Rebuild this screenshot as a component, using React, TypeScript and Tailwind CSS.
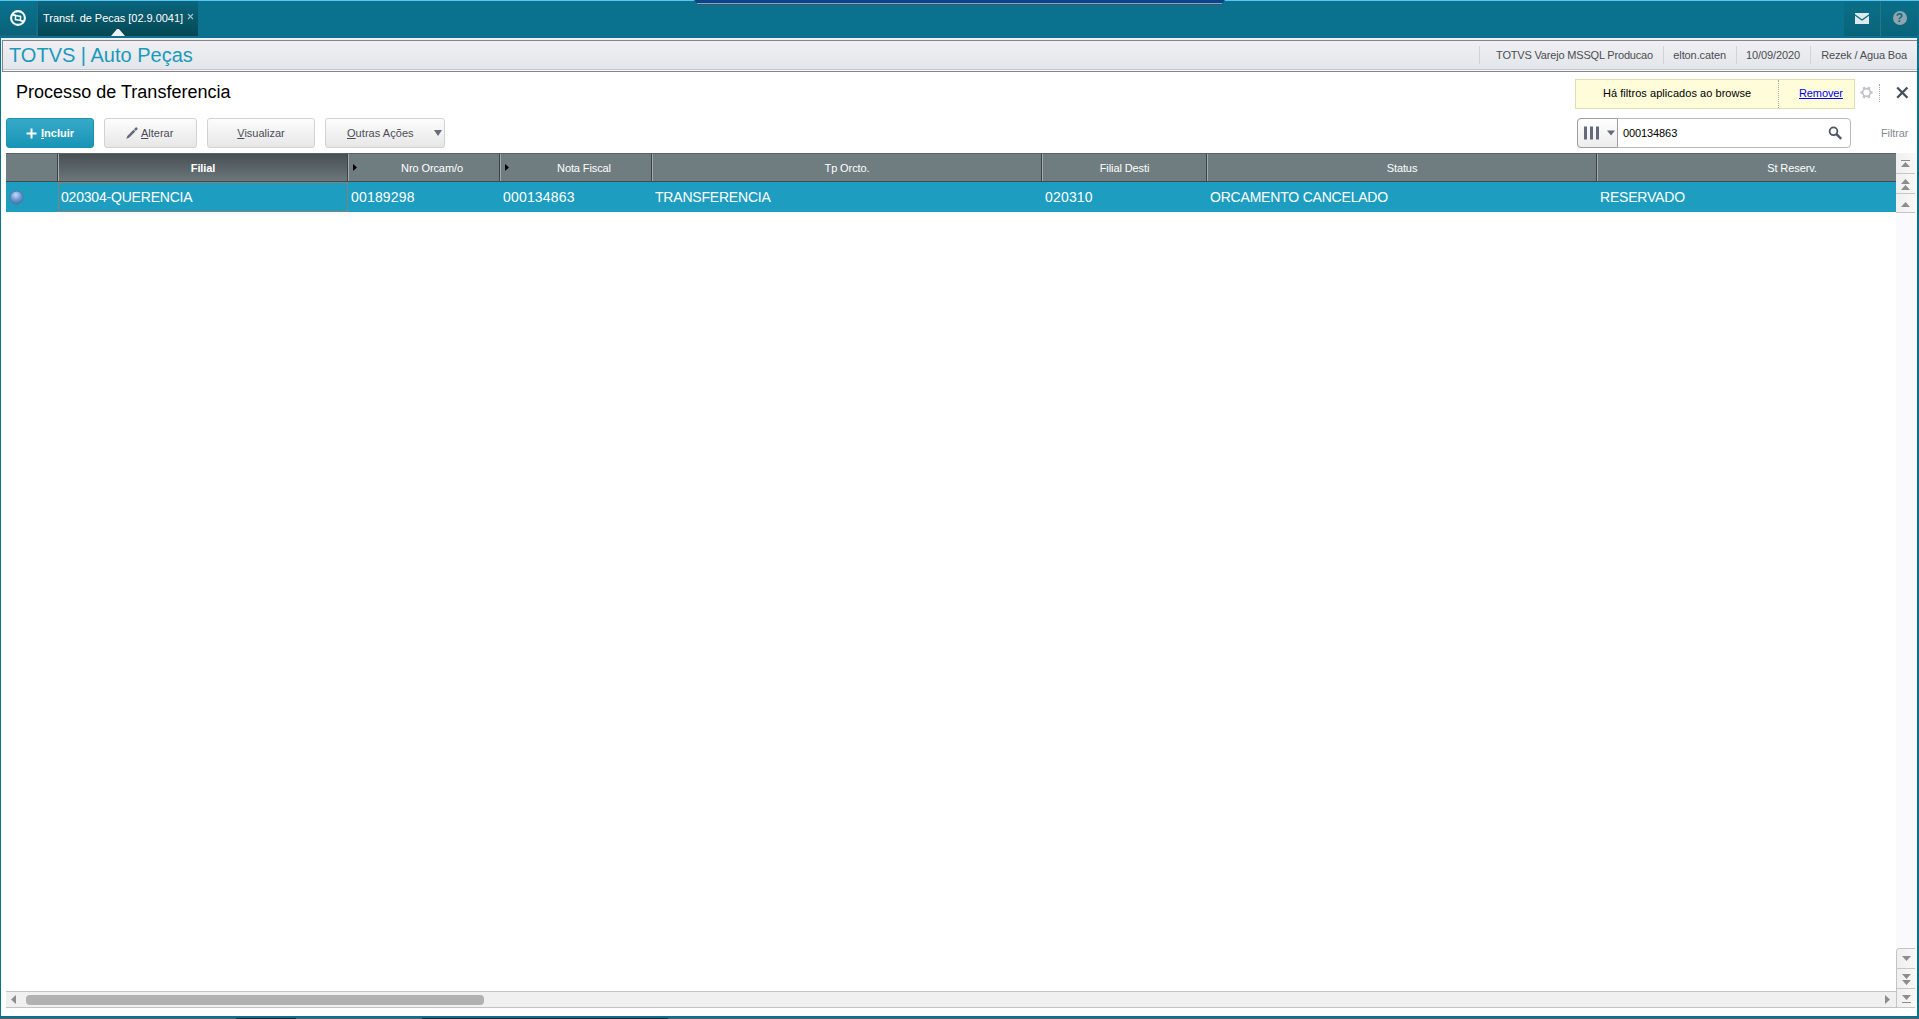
import type { ReactNode } from "react";

type Column = {
  label: string;
  value: string;
  width: string;
  sorted?: boolean;
  arrow?: boolean;
};

const columns: Column[] = [
  { label: "Filial", value: "020304-QUERENCIA", width: "w-[290px]", sorted: true },
  { label: "Nro Orcam/o", value: "00189298", width: "w-[152px]", arrow: true },
  { label: "Nota Fiscal", value: "000134863", width: "w-[152px]", arrow: true },
  { label: "Tp Orcto.", value: "TRANSFERENCIA", width: "w-[390px]" },
  { label: "Filial Desti", value: "020310", width: "w-[165px]" },
  { label: "Status", value: "ORCAMENTO CANCELADO", width: "w-[390px]" },
  { label: "St Reserv.", value: "RESERVADO", width: "w-[390px]" },
];

export default function App() {
  return (
    <div className="flex h-[1019px] w-[1919px] flex-col overflow-hidden bg-[#0a728e] font-['Liberation_Sans',Arial,sans-serif] text-[11px] leading-[13px]">
      <TopBar />
      <div className="mr-[2px] ml-px flex h-[978px] flex-col bg-white">
        <InfoBar />
        <Toolbar />
        <Browse />
      </div>
      <div className="h-[2px] shrink-0" />
      <div className="flex h-px shrink-0 bg-[#5d6063]">
        <span className="ml-[236px] w-[60px] bg-[#222]" />
        <span className="ml-[126px] w-[246px] bg-[#222]" />
      </div>
    </div>
  );
}

function TopBar() {
  return (
    <div className="relative flex h-[38px] shrink-0 border-t border-[#5bc4ee]">
      <svg className="absolute -top-px left-[693px]" width="533" height="5" aria-hidden="true">
        <path d="M1 0H532L528 4.5H5Z" fill="#0b4488" />
        <path d="M4 3.5H529" stroke="#7ea6cc" />
        <path d="M5 4.5H528" stroke="#4c5156" />
      </svg>
      <div className="flex h-[35px] w-[37px] items-center justify-center border-r border-b border-[#22657a] bg-linear-to-b from-[#0a728e] to-[#09637a]">
        <LogoMark />
      </div>
      <div className="relative ml-px flex h-[35px] w-[160px] bg-linear-to-b from-[#09657e] to-[#064855] pt-[11px] pl-[5px] text-white">
        <span className="w-[141px] tracking-[-0.03px] whitespace-nowrap">Transf. de Pecas [02.9.0041]</span>
        <svg className="ml-[3px]" width="7" height="9" viewBox="0 0 7 9" aria-hidden="true">
          <path d="M1 2l5 5M6 2l-5 5" stroke="#9fc3cd" strokeWidth="1.1" />
        </svg>
        <svg className="absolute bottom-0 left-[73px]" width="14" height="7" aria-hidden="true">
          <path d="M0 7L6 0H8L14 7Z" fill="#eef0f3" />
        </svg>
      </div>
      <div className="ml-auto flex h-[35px]">
        <div className="flex w-[37px] items-center justify-center border-r border-[#2d7387] bg-linear-to-b from-[#0a6e88] to-[#09647a]">
          <svg className="mt-[-1px]" width="14" height="11" viewBox="0 0 14 11" aria-hidden="true">
            <path d="M0 0H14V1.3L7 6.3L0 1.3Z" fill="#dce9ed" />
            <path d="M0 2.8L7 7.8L14 2.8V11H0Z" fill="#dce9ed" />
          </svg>
        </div>
        <div className="flex w-[37px] items-center justify-center bg-linear-to-b from-[#0a6e88] to-[#09647a]">
          <div className="mt-[-1px] flex h-[14px] w-[14px] items-center justify-center rounded-full bg-[#8fa4ad] text-[12px] leading-none font-bold text-[#0a6a83]">
            ?
          </div>
        </div>
        <div className="w-px" />
      </div>
    </div>
  );
}

function InfoBar() {
  return (
    <div className="flex h-[34px] shrink-0 flex-col bg-[#eef0f3] pt-[2px]">
      <div className="ml-px flex h-[32px] items-center border-y border-l border-[#868686] bg-linear-to-b from-[#f0f0f4] to-[#e1e5e9] pb-[2px] shadow-[inset_0_-1px_0_#f8f8fa,inset_0_-2px_0_#c5c8cc]">
        <div className="ml-[6px] text-[20px] leading-[28px] whitespace-nowrap text-[#1a9abc]">
          TOTVS | Auto Peças
        </div>
        <div className="ml-auto flex h-[18px] items-center text-[#4b4d52] whitespace-nowrap">
          <InfoItem width="w-[184px]">
            <span className="tracking-[-0.18px]">TOTVS Varejo MSSQL Producao</span>
          </InfoItem>
          <InfoItem width="w-[73px]">
            <span className="tracking-[-0.1px]">elton.caten</span>
          </InfoItem>
          <InfoItem width="w-[74px]">
            <span className="tracking-[-0.1px]">10/09/2020</span>
          </InfoItem>
          <InfoItem width="w-[107px]">
            <span className="tracking-[-0.14px]">Rezek / Agua Boa</span>
          </InfoItem>
        </div>
      </div>
    </div>
  );
}

function InfoItem({ width, children }: { width: string; children: ReactNode }) {
  return (
    <div className={`flex h-[18px] items-center justify-end border-l border-[#d0d3d7] pr-[10px] ${width}`}>
      {children}
    </div>
  );
}

function Toolbar() {
  return (
    <div className="flex h-[81px] shrink-0 justify-between">
      <div>
        <h1 className="mt-[9px] ml-[15px] text-[18px] leading-[22px] tracking-[0.02px] text-black">
          Processo de Transferencia
        </h1>
        <div className="mt-[15px] ml-[5px] flex gap-[10px] text-[#4a4d57]">
          <button className="flex h-[30px] w-[88px] items-center rounded-[3px] border border-[#1a94b3] bg-linear-to-b from-[#37a9c8] to-[#1595b6] pl-[19px] font-bold text-white">
            <svg className="mr-[4px]" width="11" height="11" viewBox="0 0 11 11" aria-hidden="true">
              <path d="M5.5 0.5V10.5M0.5 5.5H10.5" stroke="#fff" strokeWidth="2" />
            </svg>
            <span>
              <u>I</u>ncluir
            </span>
          </button>
          <button className="flex h-[30px] w-[93px] items-center rounded-[3px] border border-[#d2d2d4] bg-linear-to-b from-[#fdfdfd] to-[#e7e7e8] pl-[21px]">
            <svg className="mr-[3px]" width="12" height="12" viewBox="0 0 12 12" aria-hidden="true">
              <path d="M0.3 11.7L1.3 8.9L7.5 2.7L9.3 4.5L3.1 10.7Z" fill="#666a76" />
              <path d="M8 2.2L9.7 0.5Q10.5 0 11.2 0.8T11.5 2.3L9.8 4Z" fill="#666a76" />
            </svg>
            <span>
              <u>A</u>lterar
            </span>
          </button>
          <button className="h-[30px] w-[108px] rounded-[3px] border border-[#d2d2d4] bg-linear-to-b from-[#fdfdfd] to-[#e7e7e8]">
            <u>V</u>isualizar
          </button>
          <button className="flex h-[30px] w-[120px] items-center justify-between rounded-[3px] border border-[#d2d2d4] bg-linear-to-b from-[#fdfdfd] to-[#e7e7e8] pr-[2px] pl-[21px]">
            <span className="tracking-[0.05px]">
              <u>O</u>utras Ações
            </span>
            <svg width="8" height="6" aria-hidden="true">
              <path d="M0 0H8L4 6Z" fill="#666b7d" />
            </svg>
          </button>
        </div>
      </div>
      <div className="w-[342px]">
        <div className="mt-[7px] flex h-[30px] items-center text-black">
          <div className="flex h-[30px] w-[280px] items-center border border-[#deddb4] bg-[#fffcd9]">
            <div className="h-full w-[203px] border-r border-dotted border-[#aaa] pl-[27px] leading-[26px] tracking-[0.05px]">
              Há filtros aplicados ao browse
            </div>
            <a className="mt-[-2px] ml-[20px] tracking-[-0.1px] text-[#0000ee] underline">Remover</a>
          </div>
          <svg className="mt-[-3px] ml-[5px]" width="13" height="13" viewBox="0 0 13 13" aria-hidden="true">
            <circle cx="6.5" cy="6.5" r="3.9" fill="none" stroke="#c2c3c6" strokeWidth="1.7" />
            <path
              d="M10.6 6.5H12.6M2.4 6.5H0.4M8.5 2.9L9.5 1.2M4.5 2.9L3.5 1.2M8.5 10.1L9.5 11.8M4.5 10.1L3.5 11.8"
              stroke="#c2c3c6"
              strokeWidth="2.6"
            />
          </svg>
          <span className="mt-[-3px] ml-[6px] h-[18px] w-px border-l border-dotted border-[#aaa]" />
          <svg className="mt-[-3px] ml-[16px]" width="13" height="13" viewBox="0 0 13 13" aria-hidden="true">
            <path d="M1.2 1.5L11.4 11.7M11.4 1.5L1.2 11.7" stroke="#454f5e" strokeWidth="2.3" />
          </svg>
        </div>
        <div className="mt-[9px] ml-[2px] flex h-[30px] items-center">
          <div className="flex h-[30px] w-[274px] items-center rounded-[4px] border border-[#b9b9b9] bg-white">
            <div className="-ml-px flex h-[30px] w-[41px] shrink-0 items-center rounded-l-[4px] border border-[#a0a0a2] bg-linear-to-b from-[#fefefe] to-[#ededee]">
              <svg className="ml-[6px]" width="31" height="14" aria-hidden="true">
                <path d="M0 0.5H3V13.5H0ZM6 0.5H9V13.5H6ZM12 0.5H15V13.5H12Z" fill="#646a7c" />
                <path d="M23 4.5H31L27 9.5Z" fill="#646a7c" />
              </svg>
            </div>
            <span className="ml-[5px] tracking-[-0.1px] text-black">000134863</span>
            <svg className="mt-[-1px] mr-[8px] ml-auto" width="14" height="14" viewBox="0 0 14 14" aria-hidden="true">
              <circle cx="5.5" cy="5.3" r="3.9" fill="none" stroke="#4d5666" strokeWidth="1.8" />
              <path d="M8.4 8.2L13.2 12.8" stroke="#4d5666" strokeWidth="2.4" />
            </svg>
          </div>
          <span className="ml-[30px] tracking-[-0.1px] text-[#858a94]">Filtrar</span>
        </div>
      </div>
    </div>
  );
}

function Browse() {
  return (
    <div className="ml-[5px] flex h-[855px]">
      <div className="flex w-[1890px] flex-col">
        <div className="w-full overflow-hidden">
          <div className="flex h-[29px] w-[1981px] border-y border-t-[#5a6468] border-b-[#43494c] bg-[#6f7d81] text-white">
            <div className="w-[52px] border-r border-[#3d4447]" />
            {columns.map((column) => (
              <div
                key={column.label}
                className={`flex items-center border-r border-l border-r-[#3d4447] border-l-[#a3abae] ${column.width} ${
                  column.sorted ? "bg-linear-to-b from-[#485053] to-[#6b777b] font-bold" : ""
                }`}
              >
                {column.arrow && (
                  <svg className="ml-[4px] shrink-0" width="4" height="7" aria-hidden="true">
                    <path d="M0 0L4 3.5L0 7Z" fill="#000" />
                  </svg>
                )}
                <span
                  className={`flex-1 pt-[2px] text-center tracking-[-0.1px] ${column.arrow ? "pl-[8px]" : ""}`}
                >
                  {column.label}
                </span>
              </div>
            ))}
          </div>
          <div className="flex h-[30px] w-[1981px] bg-[#1d9dbf] text-[14px] leading-[30px] text-white">
            <div className="flex w-[52px] items-center pl-[3px]">
              <svg width="15" height="15" viewBox="0 0 15 15" aria-hidden="true">
                <defs>
                  <radialGradient id="status" cx="45%" cy="30%" r="75%">
                    <stop offset="0" stopColor="#c3daf6" />
                    <stop offset="0.5" stopColor="#6f9cd8" />
                    <stop offset="1" stopColor="#3d69aa" />
                  </radialGradient>
                </defs>
                <circle cx="7.5" cy="7.5" r="6.5" fill="url(#status)" stroke="#56789b" />
              </svg>
            </div>
            {columns.map((column) => (
              <div
                key={column.label}
                className={`border border-dotted pl-[2px] leading-[28px] whitespace-nowrap ${column.width} ${
                  column.sorted ? "border-[#e0683f]" : "border-transparent"
                } ${/^\d+$/.test(column.value) ? "tracking-[0.18px]" : "tracking-[-0.2px]"}`}
              >
                {column.value}
              </div>
            ))}
          </div>
        </div>
        <div className="flex-1" />
        <div className="flex h-[17px] items-center border-y border-[#c3c3c3] bg-[#f0f0f0] pr-[6px] pl-[5px]">
          <svg width="5" height="9" aria-hidden="true">
            <path d="M5 0V9L0 4.5Z" fill="#8d8d8d" />
          </svg>
          <div className="ml-[10px] h-[10px] w-[458px] rounded-[4px] bg-[#b1b1b1]" />
          <svg className="ml-auto" width="5" height="9" aria-hidden="true">
            <path d="M0 0V9L5 4.5Z" fill="#8d8d8d" />
          </svg>
        </div>
      </div>
      <div className="flex w-[19px] flex-col bg-[#fafafc]">
        <ScrollButton height="h-[21px]">
          <path d="M5 7.5H14" stroke="#8d8d8d" />
          <path d="M9.5 9L14 14H5Z" fill="#8d8d8d" />
        </ScrollButton>
        <ScrollButton height="h-[20px]">
          <path d="M9.5 5L14 10H5ZM9.5 11L14 16H5Z" fill="#8d8d8d" />
        </ScrollButton>
        <ScrollButton height="h-[19px]">
          <path d="M9.5 8L14 13H5Z" fill="#8d8d8d" />
        </ScrollButton>
        <div className="flex-1" />
        <div className="overflow-hidden rounded-tl-[4px] border-t border-l border-[#c3c3c3]">
          <ScrollButton height="h-[20px]">
            <path d="M5 7H14L9.5 12Z" fill="#8d8d8d" />
          </ScrollButton>
          <ScrollButton height="h-[20px]">
            <path d="M5 5H14L9.5 10ZM5 11H14L9.5 16Z" fill="#8d8d8d" />
          </ScrollButton>
          <ScrollButton height="h-[19px]">
            <path d="M5 6H14L9.5 11Z" fill="#8d8d8d" />
            <path d="M5 13.5H14" stroke="#8d8d8d" />
          </ScrollButton>
        </div>
      </div>
    </div>
  );
}

function ScrollButton({ height, children }: { height: string; children: ReactNode }) {
  return (
    <div
      className={`overflow-hidden border-b border-[#c6c6c6] bg-linear-to-r from-[#efefef] to-[#f8f8f9] ${height}`}
    >
      <svg width="19" height="20" aria-hidden="true">
        {children}
      </svg>
    </div>
  );
}

// ring with a slanted square inside, tied to it at two corners
function LogoMark() {
  return (
    <svg width="16" height="16" viewBox="0 0 16 16" aria-hidden="true">
      <circle cx="8" cy="8" r="6.9" fill="none" stroke="#fff" strokeWidth="2.1" />
      <path d="M5.6 5.6L10.6 6.4L10.4 10.4L5.4 9.6Z" fill="none" stroke="#fff" strokeWidth="1.5" />
      <path d="M2.6 4.6L6 5.6M13.4 11.4L10 10.4" stroke="#fff" strokeWidth="1.8" />
    </svg>
  );
}
